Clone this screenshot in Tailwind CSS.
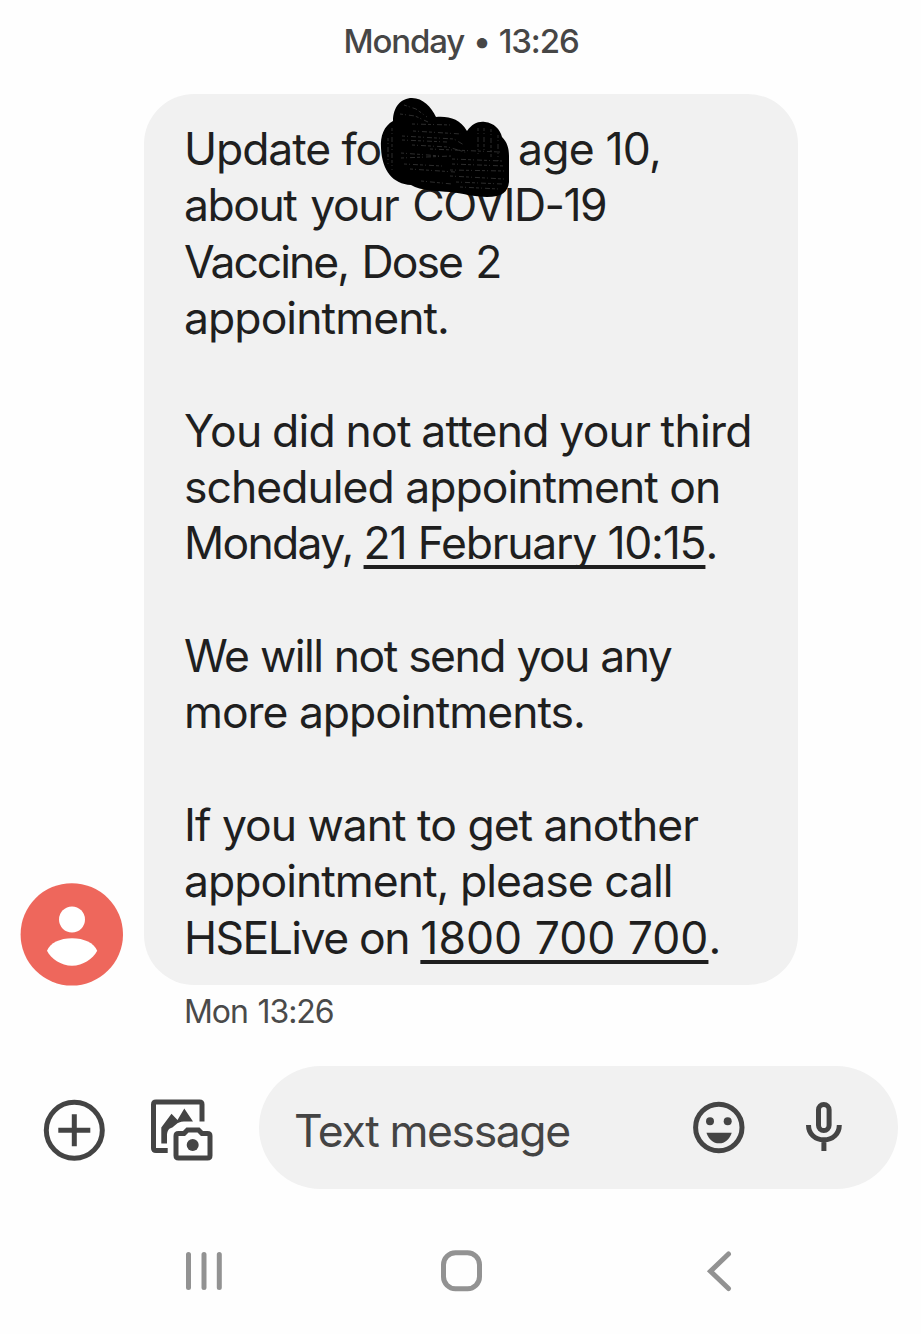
<!DOCTYPE html>
<html lang="en">
<head>
<meta charset="UTF-8">
<meta name="viewport" content="width=device-width, initial-scale=1.0">
<title>Messages</title>
<script src="https://cdn.jsdelivr.net/npm/@tailwindcss/browser@4"></script>
</head>
<body class="bg-[#fefefe] font-['Inter','Liberation_Sans',sans-serif]">

<div class="w-[921px] h-[1334px] flex flex-col overflow-hidden">

    <!-- Date -->
    <div class="h-[94px] pt-[19px] pl-[1px] text-center text-[33px] leading-[44px] tracking-[-1.15px] [word-spacing:1.5px] font-medium text-[#464646]">Monday • 13:26</div>

    <!-- Message -->
    <div class="flex items-end h-[891px] pl-[20px]">
        <svg class="w-[104px] h-[104px] shrink-0 overflow-visible" viewBox="20 881.2 104 104">
            <circle cx="71.8" cy="934.6" r="51.2" fill="#ee675c"/>
            <circle cx="72" cy="919.7" r="13" fill="#fff"/>
            <path d="M47 951C50 943 60 938.4 72 938.4S94 943 97.2 951C93 959 83 966 72 966S51 959 47 951Z" fill="#fff"/>
        </svg>
        <div class="relative ml-[20px] w-[654px] h-[891px] rounded-[50px] bg-[#f1f1f1] pl-[40px] pt-[27px] text-[44.5px] leading-[56.35px] text-[#1f1f1f] whitespace-nowrap">
            <p class="flex"><span class="w-[334px] tracking-[-1.1px]">Update for</span><span class="tracking-[-0.8px]">age 10,</span></p>
            <p class="tracking-[-1.5px] [word-spacing:3px]">about your COVID-19</p>
            <p class="tracking-[-2px] [word-spacing:3px]">Vaccine, Dose 2</p>
            <p class="tracking-[-0.95px]">appointment.</p>
            <p>&nbsp;</p>
            <p class="tracking-[-0.75px] [word-spacing:-1.3px]">You did not attend your third</p>
            <p class="tracking-[-1px]">scheduled appointment on</p>
            <p class="tracking-[-1.7px]">Monday, <a class="tracking-[-1.22px] underline decoration-[4px] underline-offset-[6px] [text-decoration-skip-ink:none]">21 February 10:15</a>.</p>
            <p>&nbsp;</p>
            <p class="tracking-[-1.58px] [word-spacing:0.6px]">We will not send you any</p>
            <p class="tracking-[-1.05px]">more appointments.</p>
            <p>&nbsp;</p>
            <p class="tracking-[-1.02px]">If you want to get another</p>
            <p class="tracking-[-1px]">appointment, please call</p>
            <p class="tracking-[-1.55px] [word-spacing:0.5px]">HSELive on <a class="tracking-normal [word-spacing:0px] underline decoration-[4px] underline-offset-[6px] [text-decoration-skip-ink:none]">1800 700 700</a>.</p>

            <!-- Scribbled-out name -->
            <svg class="absolute left-[236px] top-[3px] w-[130px] h-[101px]" viewBox="380 97 130 101" fill="none">
                <path fill="#000" d="M381 148C380 136 384 126 393 121C393 107 401 98 412 98C423 98 431 107 436 117C449 116 460 119 467 131C472 124 478 121 485 122C494 123 500 129 502 137C507 142 509 148 509 156V182C508 192 502 197 487 197C474 197 462 193 450 192C437 191 421 191 411 185C393 184 382 171 381 148Z"/>
                <path stroke="#383838" stroke-width=".8" stroke-dasharray="3 2 1 3 5 2" d="M404 105l12 4 11 8M400 114l15 2 13 6M412 124l40 1M413 131l48 3M402 136l52 3 10 6M402 140l45 2M412 145l36 2 20 6M430 149l70 3M401 153l40 3M401 158l50-2M452 164l53 2M452 159l50 2M410 169l45 3M404 164l38 2M450 170l54 1M450 176l54 3M421 181l31 3M456 182l46 2M460 187l39 2M478 128v26M484 128v25M491 129v28M498 135v26M392 128v42M388 138v26"/>
            </svg>
        </div>
    </div>
    <div class="h-[81px] pl-[184px] pt-[5px] text-[32px] leading-[44px] tracking-[-1.1px] [word-spacing:2px] text-[#4a4a4a]">Mon 13:26</div>

    <!-- Compose bar -->
    <div class="flex h-[123px] pl-[40px]">
        <svg class="w-[219px] h-[123px] shrink-0" viewBox="40 1066 219 123" fill="none" stroke="#444444" stroke-width="5">
            <circle cx="74.3" cy="1130.3" r="28"/>
            <path d="M58.3 1130.3h32M74.3 1114.3v32"/>
            <path d="M202 1121.5V1104.5q0-2.5-2.5-2.5h-43.5q-2.5 0-2.5 2.5v43.5q0 2.5 2.5 2.5h11.7"/>
            <path d="M161.3 1143.5V1127.5L171.5 1113.7L177.5 1120L184.3 1108.5L193 1121.5H184C176 1121.5 175 1127 171 1128C168 1129 167 1132 167 1136V1143.5Z" fill="#444444" stroke="none"/>
            <path d="M178.5 1133.5h5.5l3.5-3.5h11l3.5 3.5h5.5q2.5 0 2.5 2.5v19.5q0 2.5-2.5 2.5h-29q-2.5 0-2.5-2.5v-19.5q0-2.5 2.5-2.5z"/>
            <circle cx="192.7" cy="1145" r="6" fill="#444444" stroke="none"/>
        </svg>
        <div class="flex w-[639px] h-[123px] rounded-full bg-[#f1f1f1] pl-[35px]">
            <span class="w-[396px] pt-[37px] text-[44.5px] leading-[56px] tracking-[-1.4px] text-[#444444] whitespace-nowrap">Text message</span>
            <svg class="w-[160px] h-[123px]" viewBox="690 1066 160 123" fill="none" stroke="#444444" stroke-width="5">
                <circle cx="718.8" cy="1127.5" r="23.2"/>
                <g fill="#444444" stroke="none">
                    <circle cx="710" cy="1121.3" r="4"/>
                    <circle cx="727.7" cy="1121.3" r="4"/>
                    <path d="M706.5 1132.7h25.2C729.5 1139.5 725 1143.3 719.1 1143.3S708.7 1139.5 706.5 1132.7Z"/>
                </g>
                <rect x="818.5" y="1104.5" width="10.6" height="26" rx="5.3"/>
                <path d="M808.5 1125C808.5 1134 815 1139.8 823.9 1139.8S839.3 1134 839.3 1125M823.9 1139.5v11.5"/>
            </svg>
        </div>
    </div>

    <!-- Navigation -->
    <div class="flex items-start pt-[59px] pl-[184px]">
        <svg class="w-[40px] h-[46px]" viewBox="184 1248 40 46" stroke="#929292" stroke-width="5" stroke-linecap="round">
            <path d="M188.5 1254.5v33M204 1254.5v33M219.3 1254.5v33"/>
        </svg>
        <svg class="ml-[216px] w-[44px] h-[46px]" viewBox="440 1248 44 46" fill="none" stroke="#929292" stroke-width="5">
            <rect x="443.5" y="1252.7" width="36" height="36" rx="12"/>
        </svg>
        <svg class="ml-[222px] w-[28px] h-[46px]" viewBox="706 1248 28 46" fill="none" stroke="#929292" stroke-width="5" stroke-linecap="round">
            <path d="M728.5 1254L710.5 1271.3L728.5 1288.5"/>
        </svg>
    </div>
</div>
</body>
</html>
